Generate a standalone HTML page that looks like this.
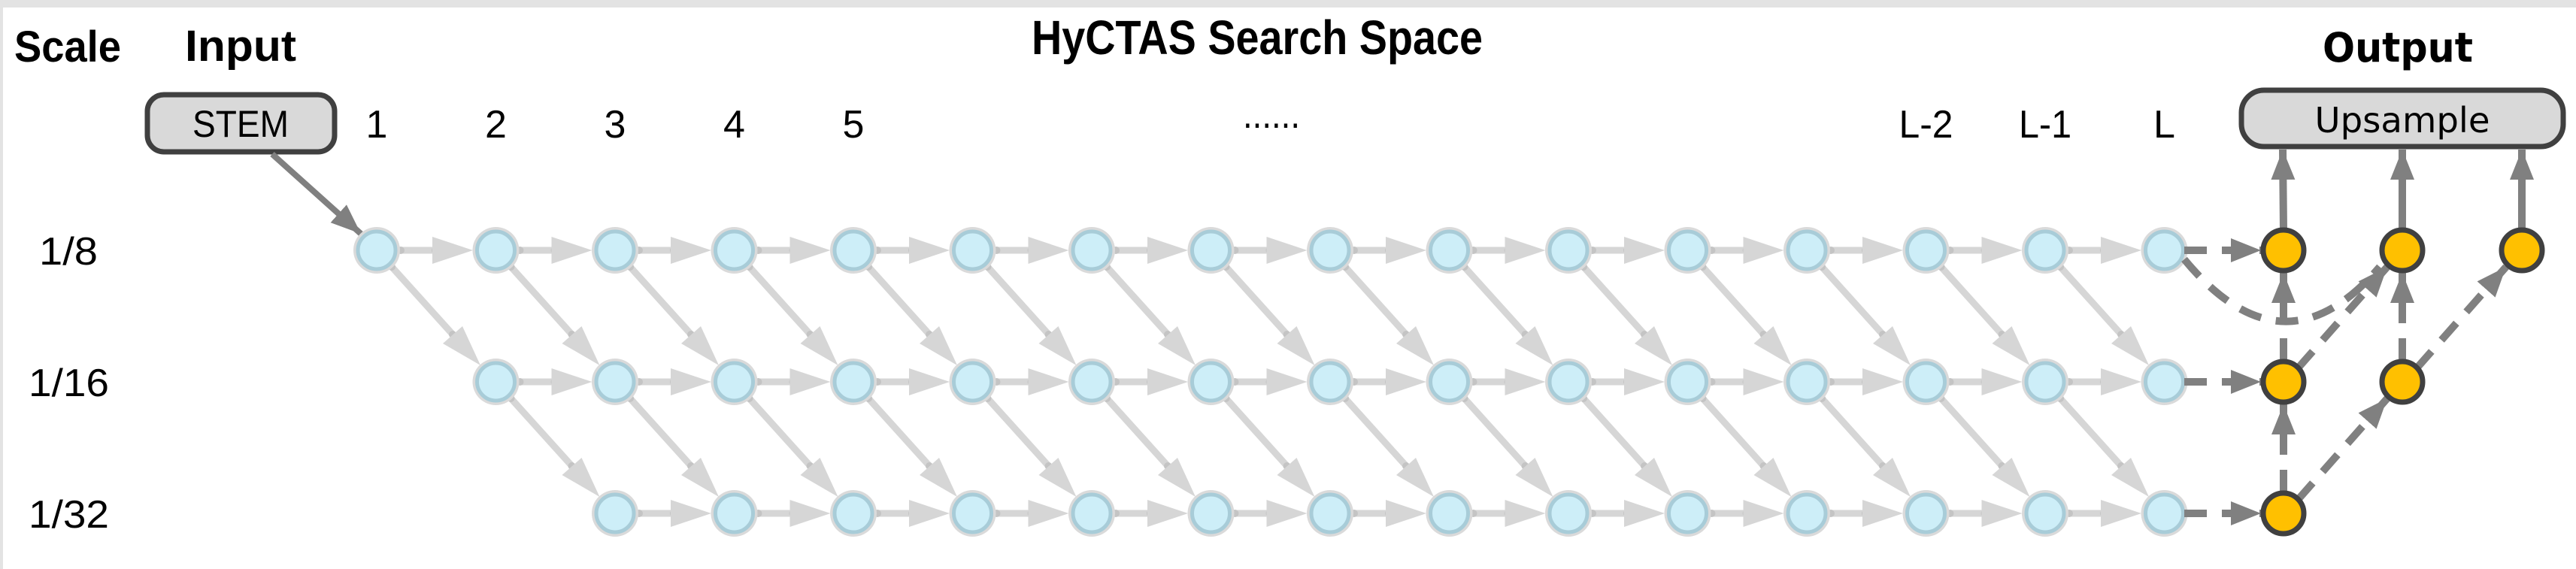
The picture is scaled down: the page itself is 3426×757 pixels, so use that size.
<!DOCTYPE html>
<html><head><meta charset="utf-8"><style>
html,body{margin:0;padding:0;background:#fff;}
svg{display:block;}
</style></head><body>
<svg width="3426" height="757" viewBox="0 0 3426 757" xmlns="http://www.w3.org/2000/svg">
<defs>
<marker id="dh" markerUnits="userSpaceOnUse" markerWidth="44" markerHeight="34" refX="40" refY="16" orient="auto"><path d="M0,0 L40,16 L0,32 z" fill="#808080"/></marker>
<g id="n"><circle r="31" fill="#dadada"/><circle r="25" fill="#cdeef8" stroke="#a8ccd8" stroke-width="5"/></g>
<g id="h"><line x1="30" y1="0" x2="80" y2="0" stroke="#d6d6d6" stroke-width="9"/><circle cx="32" cy="0" r="5" fill="#c4c4c4"/><circle cx="78" cy="0" r="5" fill="#c4c4c4"/><polygon points="74,-18 128,0 74,18" fill="#d6d6d6"/></g>
<g id="d"><line x1="20" y1="22" x2="103" y2="114" stroke="#d6d6d6" stroke-width="9"/><circle cx="20" cy="22" r="5" fill="#c4c4c4"/><circle cx="101" cy="112" r="5" fill="#c4c4c4"/><polygon points="88,124 138,153 114,101" fill="#d6d6d6"/></g>
</defs>
<rect x="0" y="0" width="3426" height="10" fill="#e3e3e3"/>
<rect x="0" y="0" width="4" height="757" fill="#e3e3e3"/>

<g font-family="Liberation Sans, sans-serif" fill="#000">
<text x="19" y="82" font-size="58" font-weight="bold" textLength="142" lengthAdjust="spacingAndGlyphs">Scale</text>
<text x="246" y="81" font-size="58" font-weight="bold" textLength="148" lengthAdjust="spacingAndGlyphs">Input</text>
<text x="1372" y="72" font-size="64" font-weight="bold" textLength="600" lengthAdjust="spacingAndGlyphs">HyCTAS Search Space</text>
<text x="52" y="352" font-size="52" textLength="78" lengthAdjust="spacingAndGlyphs">1/8</text>
<text x="38" y="527" font-size="52" textLength="107" lengthAdjust="spacingAndGlyphs">1/16</text>
<text x="38" y="702" font-size="52" textLength="107" lengthAdjust="spacingAndGlyphs">1/32</text>
<g font-size="52" text-anchor="middle">
<text x="501" y="183">1</text><text x="659.5" y="183">2</text><text x="818" y="183">3</text><text x="976.5" y="183">4</text><text x="1135" y="183">5</text>
<text x="1691" y="170" textLength="76" lengthAdjust="spacingAndGlyphs">......</text>
<text x="2561.5" y="183" textLength="72" lengthAdjust="spacingAndGlyphs">L-2</text><text x="2720" y="183" textLength="70" lengthAdjust="spacingAndGlyphs">L-1</text><text x="2878.5" y="183">L</text>
</g>
<text x="3089" y="82" font-family="DejaVu Sans, sans-serif" font-size="54" font-weight="bold" textLength="200" lengthAdjust="spacingAndGlyphs">Output</text>
</g>

<!-- STEM -->
<rect x="196" y="126" width="249" height="76" rx="22" fill="#d9d9d9" stroke="#404040" stroke-width="7"/>
<text x="320" y="182" font-family="Liberation Sans, sans-serif" font-size="50" text-anchor="middle" textLength="128" lengthAdjust="spacingAndGlyphs">STEM</text>
<line x1="362" y1="205" x2="480" y2="311" stroke="#808080" stroke-width="8" marker-end="url(#dh)"/>

<g>
<use href="#h" x="501" y="333"/><use href="#h" x="659.5" y="333"/><use href="#h" x="818" y="333"/><use href="#h" x="976.5" y="333"/><use href="#h" x="1135" y="333"/><use href="#h" x="1293.5" y="333"/><use href="#h" x="1452" y="333"/><use href="#h" x="1610.5" y="333"/><use href="#h" x="1769" y="333"/><use href="#h" x="1927.5" y="333"/><use href="#h" x="2086" y="333"/><use href="#h" x="2244.5" y="333"/><use href="#h" x="2403" y="333"/><use href="#h" x="2561.5" y="333"/><use href="#h" x="2720" y="333"/>
<use href="#h" x="659.5" y="508"/><use href="#h" x="818" y="508"/><use href="#h" x="976.5" y="508"/><use href="#h" x="1135" y="508"/><use href="#h" x="1293.5" y="508"/><use href="#h" x="1452" y="508"/><use href="#h" x="1610.5" y="508"/><use href="#h" x="1769" y="508"/><use href="#h" x="1927.5" y="508"/><use href="#h" x="2086" y="508"/><use href="#h" x="2244.5" y="508"/><use href="#h" x="2403" y="508"/><use href="#h" x="2561.5" y="508"/><use href="#h" x="2720" y="508"/>
<use href="#h" x="818" y="683"/><use href="#h" x="976.5" y="683"/><use href="#h" x="1135" y="683"/><use href="#h" x="1293.5" y="683"/><use href="#h" x="1452" y="683"/><use href="#h" x="1610.5" y="683"/><use href="#h" x="1769" y="683"/><use href="#h" x="1927.5" y="683"/><use href="#h" x="2086" y="683"/><use href="#h" x="2244.5" y="683"/><use href="#h" x="2403" y="683"/><use href="#h" x="2561.5" y="683"/><use href="#h" x="2720" y="683"/>
</g>
<g>
<use href="#d" x="501" y="333"/><use href="#d" x="659.5" y="333"/><use href="#d" x="818" y="333"/><use href="#d" x="976.5" y="333"/><use href="#d" x="1135" y="333"/><use href="#d" x="1293.5" y="333"/><use href="#d" x="1452" y="333"/><use href="#d" x="1610.5" y="333"/><use href="#d" x="1769" y="333"/><use href="#d" x="1927.5" y="333"/><use href="#d" x="2086" y="333"/><use href="#d" x="2244.5" y="333"/><use href="#d" x="2403" y="333"/><use href="#d" x="2561.5" y="333"/><use href="#d" x="2720" y="333"/>
<use href="#d" x="659.5" y="508"/><use href="#d" x="818" y="508"/><use href="#d" x="976.5" y="508"/><use href="#d" x="1135" y="508"/><use href="#d" x="1293.5" y="508"/><use href="#d" x="1452" y="508"/><use href="#d" x="1610.5" y="508"/><use href="#d" x="1769" y="508"/><use href="#d" x="1927.5" y="508"/><use href="#d" x="2086" y="508"/><use href="#d" x="2244.5" y="508"/><use href="#d" x="2403" y="508"/><use href="#d" x="2561.5" y="508"/><use href="#d" x="2720" y="508"/>
</g>
<g>
<use href="#n" x="501" y="333"/><use href="#n" x="659.5" y="333"/><use href="#n" x="818" y="333"/><use href="#n" x="976.5" y="333"/><use href="#n" x="1135" y="333"/><use href="#n" x="1293.5" y="333"/><use href="#n" x="1452" y="333"/><use href="#n" x="1610.5" y="333"/><use href="#n" x="1769" y="333"/><use href="#n" x="1927.5" y="333"/><use href="#n" x="2086" y="333"/><use href="#n" x="2244.5" y="333"/><use href="#n" x="2403" y="333"/><use href="#n" x="2561.5" y="333"/><use href="#n" x="2720" y="333"/><use href="#n" x="2878.5" y="333"/>
<use href="#n" x="659.5" y="508"/><use href="#n" x="818" y="508"/><use href="#n" x="976.5" y="508"/><use href="#n" x="1135" y="508"/><use href="#n" x="1293.5" y="508"/><use href="#n" x="1452" y="508"/><use href="#n" x="1610.5" y="508"/><use href="#n" x="1769" y="508"/><use href="#n" x="1927.5" y="508"/><use href="#n" x="2086" y="508"/><use href="#n" x="2244.5" y="508"/><use href="#n" x="2403" y="508"/><use href="#n" x="2561.5" y="508"/><use href="#n" x="2720" y="508"/><use href="#n" x="2878.5" y="508"/>
<use href="#n" x="818" y="683"/><use href="#n" x="976.5" y="683"/><use href="#n" x="1135" y="683"/><use href="#n" x="1293.5" y="683"/><use href="#n" x="1452" y="683"/><use href="#n" x="1610.5" y="683"/><use href="#n" x="1769" y="683"/><use href="#n" x="1927.5" y="683"/><use href="#n" x="2086" y="683"/><use href="#n" x="2244.5" y="683"/><use href="#n" x="2403" y="683"/><use href="#n" x="2561.5" y="683"/><use href="#n" x="2720" y="683"/><use href="#n" x="2878.5" y="683"/>
</g>

<rect x="2981" y="120" width="428" height="75" rx="30" fill="#d9d9d9" stroke="#404040" stroke-width="7"/>
<text x="3195" y="176" font-family="DejaVu Sans, sans-serif" font-size="46" text-anchor="middle" textLength="233" lengthAdjust="spacingAndGlyphs">Upsample</text>

<g stroke="#808080" stroke-width="10" fill="none">
<line x1="3037" y1="305" x2="3036" y2="199" marker-end="url(#dh)"/>
<line x1="3195" y1="305" x2="3195" y2="199" marker-end="url(#dh)"/>
<line x1="3354" y1="305" x2="3354" y2="199" marker-end="url(#dh)"/>
<g stroke-dasharray="30,20">
<line x1="2905" y1="333" x2="3007" y2="333" marker-end="url(#dh)"/>
<line x1="2905" y1="508" x2="3007" y2="508" marker-end="url(#dh)"/>
<line x1="2905" y1="683" x2="3007" y2="683" marker-end="url(#dh)"/>
<line x1="3037" y1="480" x2="3037" y2="363" marker-end="url(#dh)"/>
<line x1="3037" y1="655" x2="3037" y2="538" marker-end="url(#dh)"/>
<line x1="3195" y1="480" x2="3195" y2="363" marker-end="url(#dh)"/>
<line x1="3056" y1="490" x2="3175" y2="355" marker-end="url(#dh)"/>
<line x1="3056" y1="665" x2="3175" y2="530" marker-end="url(#dh)"/>
<line x1="3214" y1="490" x2="3333" y2="355" marker-end="url(#dh)"/>
<path d="M2905,345 Q3037,505 3165,355"/>
</g>
</g>
<g fill="#ffc000" stroke="#404040" stroke-width="7">
<circle cx="3037" cy="333" r="27"/><circle cx="3195" cy="333" r="27"/><circle cx="3354" cy="333" r="27"/>
<circle cx="3037" cy="508" r="27"/><circle cx="3195" cy="508" r="27"/>
<circle cx="3037" cy="683" r="27"/>
</g>
</svg>
</body></html>
